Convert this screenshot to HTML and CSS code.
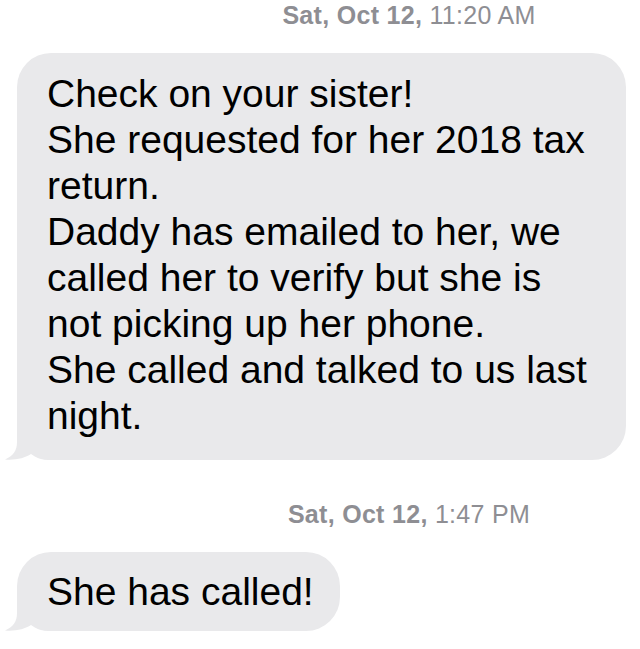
FILE: index.html
```html
<!DOCTYPE html>
<html lang="en">
<head>
<meta charset="utf-8">
<title>Messages</title>
<link rel="stylesheet" href="styles.css">
</head>
<body>
<main class="thread">
  <div class="stamp stamp-first"><b class="stamp-day">Sat, Oct 12,</b> 11:20 AM</div>
  <div class="bubble bubble-long">
    <svg class="tail" viewBox="0 0 52 40" width="52" height="40" aria-hidden="true"><path d="M12 0 L12 22 C12 31 8 36 0 39.5 C10 40.5 20 38 26 34 C30 37 36 40 44 40 L52 40 L52 0 Z"/></svg>
    <span class="bubble-text">Check on your sister!<br>
    She requested for her 2018 tax<br>
    return.<br>
    Daddy has emailed to her, we<br>
    called her to verify but she is<br>
    not picking up her phone.<br>
    She called and talked to us last<br>
    night.</span>
  </div>
  <div class="stamp stamp-second"><b class="stamp-day">Sat, Oct 12,</b> 1:47 PM</div>
  <div class="bubble bubble-short">
    <svg class="tail" viewBox="0 0 52 40" width="52" height="40" aria-hidden="true"><path d="M12 0 L12 22 C12 31 8 36 0 39.5 C10 40.5 20 38 26 34 C30 37 36 40 44 40 L52 40 L52 0 Z"/></svg>
    <span class="bubble-text">She has called!</span>
  </div>
</main>
</body>
</html>
```
FILE: styles.css
```css
html, body {
  margin: 0;
  padding: 0;
  background: #ffffff;
}

body {
  font-family: "Liberation Sans", Arial, sans-serif;
  width: 640px;
  height: 649px;
  overflow: hidden;
}

.thread {
  display: flex;
  flex-direction: column;
}

.stamp {
  padding-left: 178px;
  text-align: center;
  font-size: 25px;
  line-height: 30px;
  color: #8e8e93;
  letter-spacing: 0.3px;
}

.stamp-day {
  font-weight: 700;
}

.stamp-first {
  margin-top: 0;
}

.stamp-second {
  margin-top: 39px;
}

.bubble {
  position: relative;
  align-self: flex-start;
  box-sizing: border-box;
  margin-left: 17px;
  background: #e9e9eb;
  color: #000;
  border-radius: 34px;
  font-size: 39px;
  line-height: 46px;
}

.bubble-text {
  position: relative;
}

.bubble-long {
  width: 609px;
  margin-top: 23px;
  padding: 18px 30px 21px;
}

.bubble-short {
  margin-top: 23px;
  padding: 17px 26px 16px 30px;
}

.tail {
  position: absolute;
  left: -12px;
  bottom: 0;
  fill: #e9e9eb;
  display: block;
}
```
